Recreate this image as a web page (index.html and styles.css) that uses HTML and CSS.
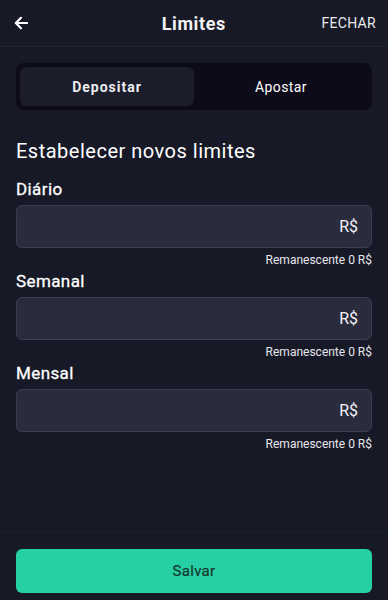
FILE: index.html
```html
<!DOCTYPE html>
<html lang="pt-BR">
<head>
  <meta charset="UTF-8">
  <title>Limites</title>
  <meta name="viewport" content="width=device-width, initial-scale=1.0">
  <link rel="stylesheet" href="styles.css">
</head>
<body>

  <div class="page">
    <header class="topbar">
      <button class="back" aria-label="Voltar">
        <svg width="14" height="14" viewBox="0 0 14 14" fill="none" stroke="#fff" stroke-width="2.2" stroke-linecap="round" stroke-linejoin="round">
          <path d="M13 7H2"/>
          <path d="M7 1.8L1.8 7L7 12.2"/>
        </svg>
      </button>
      <h1>Limites</h1>
      <button class="close">FECHAR</button>
    </header>

    <main class="content">
      <div class="tabs">
        <button class="tab active">Depositar</button>
        <button class="tab">Apostar</button>
      </div>

      <h2>Estabelecer novos limites</h2>

      <div class="field">
        <label for="daily">Diário</label>
        <div class="input-box">
          <input id="daily" type="text">
          <span class="currency">R$</span>
        </div>
        <p class="remaining">Remanescente 0 R$</p>
      </div>

      <div class="field">
        <label for="weekly">Semanal</label>
        <div class="input-box">
          <input id="weekly" type="text">
          <span class="currency">R$</span>
        </div>
        <p class="remaining">Remanescente 0 R$</p>
      </div>

      <div class="field">
        <label for="monthly">Mensal</label>
        <div class="input-box">
          <input id="monthly" type="text">
          <span class="currency">R$</span>
        </div>
        <p class="remaining">Remanescente 0 R$</p>
      </div>
    </main>

    <footer class="footer">
      <button class="save">Salvar</button>
    </footer>
  </div>

</body>
</html>
```

FILE: styles.css
```css
* {
  box-sizing: border-box;
}

body {
  margin: 0;
  font-family: Roboto, "Liberation Sans", Arial, sans-serif;
  background: #171926;
  color: #fff;
}

button {
  font-family: inherit;
  cursor: pointer;
}

.page {
  display: flex;
  flex-direction: column;
  min-height: 100vh;
}

.topbar {
  display: flex;
  align-items: center;
  justify-content: space-between;
  height: 47px;
  padding: 0 12px 0 8px;
  border-bottom: 1px solid #1f2230;
}

.back {
  display: flex;
  align-items: center;
  justify-content: center;
  width: 22px;
  height: 22px;
  padding: 0;
  margin-left: 2px;
  background: none;
  border: none;
}

.topbar h1 {
  margin: 0 0 0 34px;
  font-size: 18px;
  font-weight: 700;
  letter-spacing: 0.6px;
  color: #f2f2f5;
}

.close {
  padding: 0;
  background: none;
  border: none;
  color: #e9e9ee;
  font-size: 14px;
  letter-spacing: 0.3px;
}

.content {
  flex: 1;
  padding: 16px 16px 0;
}

.tabs {
  display: flex;
  height: 47px;
  padding: 4px;
  background: #0d0a1a;
  border-radius: 8px;
}

.tab {
  flex: 1;
  background: none;
  border: none;
  border-radius: 6px;
  color: #fff;
  font-size: 14px;
  letter-spacing: 0.4px;
}

.tab.active {
  background: #1b1d2b;
  font-weight: 700;
  letter-spacing: 1px;
  color: #ececf1;
}

h2 {
  margin: 29px 0 0;
  font-size: 20px;
  line-height: 24px;
  font-weight: 400;
  letter-spacing: 0.5px;
}

.field {
  margin-top: 16px;
}

.field + .field {
  margin-top: 3px;
}

label {
  display: block;
  font-size: 17px;
  line-height: 20px;
  font-weight: 400;
  letter-spacing: 0.4px;
  -webkit-text-stroke: 0.3px #fff;
}

.input-box {
  display: flex;
  align-items: center;
  height: 43px;
  margin-top: 6px;
  padding: 0 13px 0 12px;
  background: #2a2c3d;
  border: 1px solid #3b3e51;
  border-radius: 6px;
}

.input-box input {
  flex: 1;
  min-width: 0;
  background: none;
  border: none;
  outline: none;
  color: #fff;
  font-family: inherit;
  font-size: 16px;
}

.currency {
  font-size: 16px;
  color: #f1f1f4;
}

.remaining {
  margin: 4px 0 0;
  font-size: 12px;
  line-height: 16px;
  text-align: right;
  color: #e6e6ec;
}

.footer {
  padding: 16px 16px 7px;
  border-top: 1px solid #1c1f2d;
}

.save {
  display: block;
  width: 100%;
  height: 44px;
  background: #27cfa5;
  border: none;
  border-radius: 6px;
  color: #15382e;
  font-size: 15px;
  font-weight: 400;
  letter-spacing: 0.3px;
  -webkit-text-stroke: 0.2px #15382e;
}
```
